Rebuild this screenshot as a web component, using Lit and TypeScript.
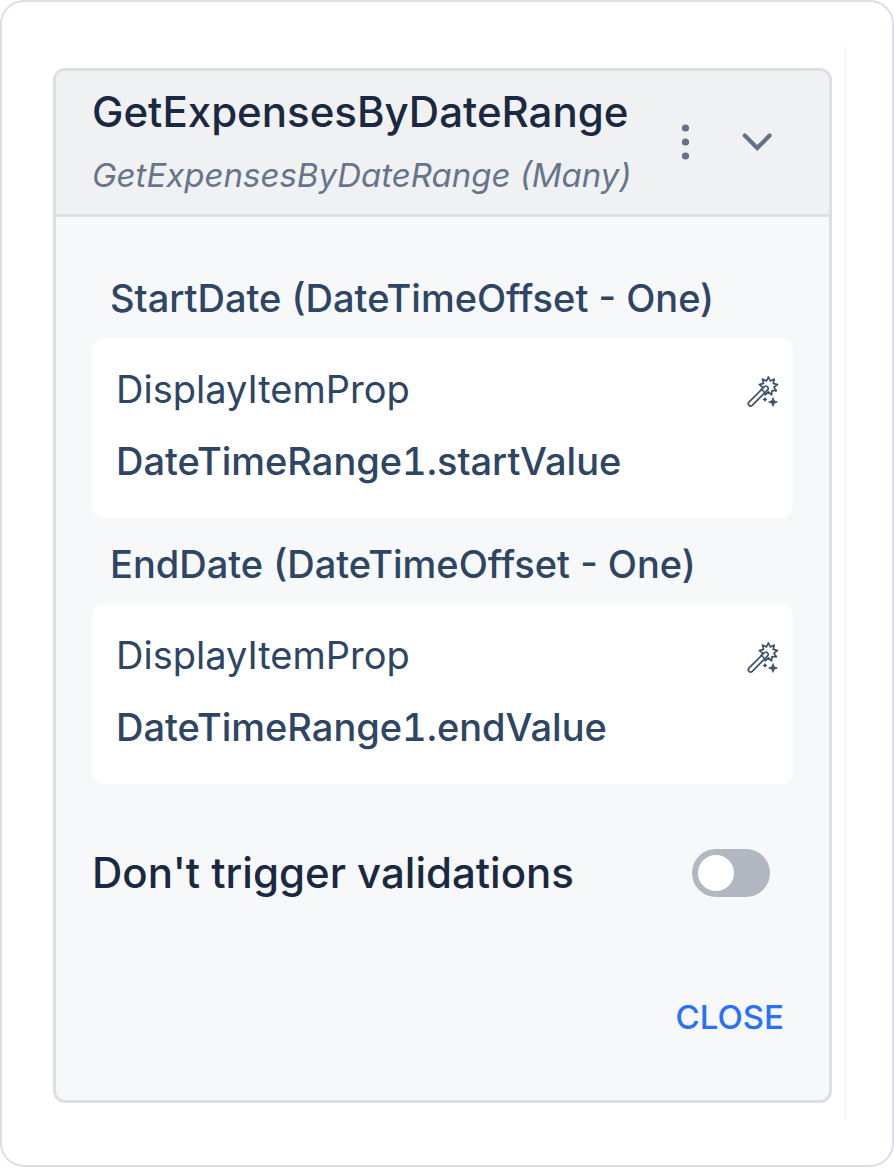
import { LitElement, html, svg, css } from "lit";
import { customElement, property, state } from "lit/decorators.js";

const starPoints = (cx: number, cy: number, outer: number, inner: number, spikes: number) =>
  Array.from({ length: spikes * 2 }, (_, i) => {
    const r = i % 2 === 0 ? outer : inner;
    const a = -Math.PI / 2 + (i * Math.PI) / spikes;
    return `${(cx + r * Math.cos(a)).toFixed(2)},${(cy + r * Math.sin(a)).toFixed(2)}`;
  }).join(" ");

const wandIcon = html`<svg width="34" height="34" viewBox="0 0 34 34" fill="none" stroke="currentColor" aria-hidden="true">
  ${svg`<polygon points=${starPoints(22.4, 11.2, 9.2, 5.6, 9)} stroke-width="1.7" stroke-linejoin="round"></polygon>`}
  <path d="M2.9 27.2 18.6 11.5a1.6 1.6 0 0 1 2.3 0l.9.9a1.6 1.6 0 0 1 0 2.3L6.2 30.4a2.3 2.3 0 0 1-3.3-3.2Z" fill="#fff" stroke-width="1.7"></path>
  <path d="M15.6 14.5 18.8 17.7" stroke-width="1.5"></path>
  <path d="M27 22.6 28.2 25.8 31.4 27 28.2 28.2 27 31.4 25.8 28.2 22.6 27 25.8 25.8Z" fill="currentColor" stroke-width="0.8"></path>
  <path d="M19 22 20 23.4 21.4 24.4 20 25.4 19 26.8 18 25.4 16.6 24.4 18 23.4Z" fill="currentColor" stroke="none"></path>
</svg>`;

@customElement("param-field")
export class ParamField extends LitElement {
  @property() label = "";
  @property() kind = "";
  @property() value = "";

  static styles = css`
    :host {
      display: block;
    }
    .label {
      margin: 0;
      padding: 19px 18px 13px;
      font-size: 38px;
      line-height: 54px;
      font-weight: 500;
    }
    .box {
      display: flex;
      align-items: flex-start;
      justify-content: space-between;
      padding: 15px 13px 21px 24px;
      border-radius: 12px;
      background: #fff;
    }
    .line {
      margin: 0;
      font-size: 38px;
      line-height: 72px;
      font-variant-numeric: tabular-nums;
    }
    .strong {
      font-weight: 500;
    }
    .wand {
      display: flex;
      align-items: center;
      height: 78px;
      margin: 0;
      padding: 0;
      border: 0;
      background: none;
      color: #3d526e;
      cursor: pointer;
    }
  `;

  render() {
    return html`
      <h3 class="label">${this.label}</h3>
      <div class="box">
        <div>
          <p class="line">${this.kind}</p>
          <p class="line strong">${this.value}</p>
        </div>
        <button class="wand" type="button" aria-label="Edit value">${wandIcon}</button>
      </div>
    `;
  }
}

@customElement("app-root")
export class AppRoot extends LitElement {
  @state() private skipValidations = false;

  private params = [
    { label: "StartDate (DateTimeOffset - One)", kind: "DisplayItemProp", value: "DateTimeRange1.startValue" },
    { label: "EndDate (DateTimeOffset - One)", kind: "DisplayItemProp", value: "DateTimeRange1.endValue" },
  ];

  static styles = css`
    :host {
      display: block;
      font-family: Inter, "Liberation Sans", sans-serif;
      color: #2e4563;
      background: #fff;
    }
    .frame {
      padding: 45px;
      border: 2px solid #dcdfe4;
      border-radius: 24px;
    }
    .panel {
      padding: 21px 12px 17px 6px;
      border-right: 3px solid #f7f8fa;
    }
    .card {
      overflow: hidden;
      border: 3px solid #dddfe5;
      border-radius: 12px;
      background: #f7f8fa;
    }
    .header {
      display: flex;
      align-items: center;
      justify-content: space-between;
      padding: 8px 48px 9px 36px;
      border-bottom: 3px solid #dddfe5;
      background: #f0f1f3;
    }
    .title {
      margin: 0;
      font-size: 42px;
      line-height: 66px;
      font-weight: 500;
      color: #1a2842;
    }
    .subtitle {
      margin: 0;
      font-size: 33px;
      line-height: 60px;
      font-style: italic;
      color: #66758c;
    }
    .actions {
      display: flex;
      gap: 24px;
    }
    .icon {
      display: block;
      margin: 0;
      padding: 0;
      border: 0;
      background: none;
      color: #62728b;
      cursor: pointer;
    }
    .icon svg {
      display: block;
    }
    .body {
      padding: 35px 36px 47px;
    }
    .option {
      display: flex;
      align-items: center;
      justify-content: space-between;
      margin-top: 65px;
      padding-right: 23px;
      font-size: 42px;
      line-height: 48px;
      font-weight: 500;
      color: #1a2842;
    }
    .toggle {
      appearance: none;
      box-sizing: border-box;
      flex: none;
      width: 78px;
      height: 48px;
      margin: 0;
      padding: 6px;
      border-radius: 24px;
      background: #b1b8c2;
      cursor: pointer;
    }
    .toggle::before {
      content: "";
      display: block;
      width: 36px;
      height: 36px;
      border-radius: 50%;
      background: #fff;
    }
    .toggle:checked {
      background: #2970ff;
    }
    .toggle:checked::before {
      margin-left: auto;
    }
    .footer {
      display: flex;
      justify-content: flex-end;
      margin-top: 84px;
    }
    .close {
      margin: 0;
      padding: 0 9px;
      border: 0;
      background: none;
      font-family: inherit;
      font-size: 33px;
      line-height: 72px;
      font-weight: 500;
      color: #2970ff;
      cursor: pointer;
    }
  `;

  render() {
    return html`
      <main class="frame">
        <div class="panel">
          <section class="card">
            <header class="header">
              <div>
                <h2 class="title">GetExpensesByDateRange</h2>
                <p class="subtitle">GetExpensesByDateRange (Many)</p>
              </div>
              <div class="actions">
                <button class="icon" type="button" aria-label="More options">
                  <svg width="48" height="48" viewBox="0 0 48 48" fill="currentColor" aria-hidden="true">
                    <circle cx="24.5" cy="10" r="3.6"></circle>
                    <circle cx="24.5" cy="24" r="3.6"></circle>
                    <circle cx="24.5" cy="38" r="3.6"></circle>
                  </svg>
                </button>
                <button class="icon" type="button" aria-label="Collapse">
                  <svg width="48" height="48" viewBox="0 0 48 48" fill="none" stroke="currentColor" stroke-width="4.2" stroke-linecap="round" stroke-linejoin="miter" aria-hidden="true">
                    <path d="M11.8 17.6 24.2 30 36.6 17.6"></path>
                  </svg>
                </button>
              </div>
            </header>
            <div class="body">
              ${this.params.map(
                (p) => html`<param-field .label=${p.label} .kind=${p.kind} .value=${p.value}></param-field>`
              )}
              <div class="option">
                <label for="skip">Don't trigger validations</label>
                <input
                  class="toggle"
                  id="skip"
                  type="checkbox"
                  role="switch"
                  .checked=${this.skipValidations}
                  @change=${(e: Event) => (this.skipValidations = (e.target as HTMLInputElement).checked)}
                />
              </div>
              <div class="footer">
                <button class="close" type="button">CLOSE</button>
              </div>
            </div>
          </section>
        </div>
      </main>
    `;
  }
}
